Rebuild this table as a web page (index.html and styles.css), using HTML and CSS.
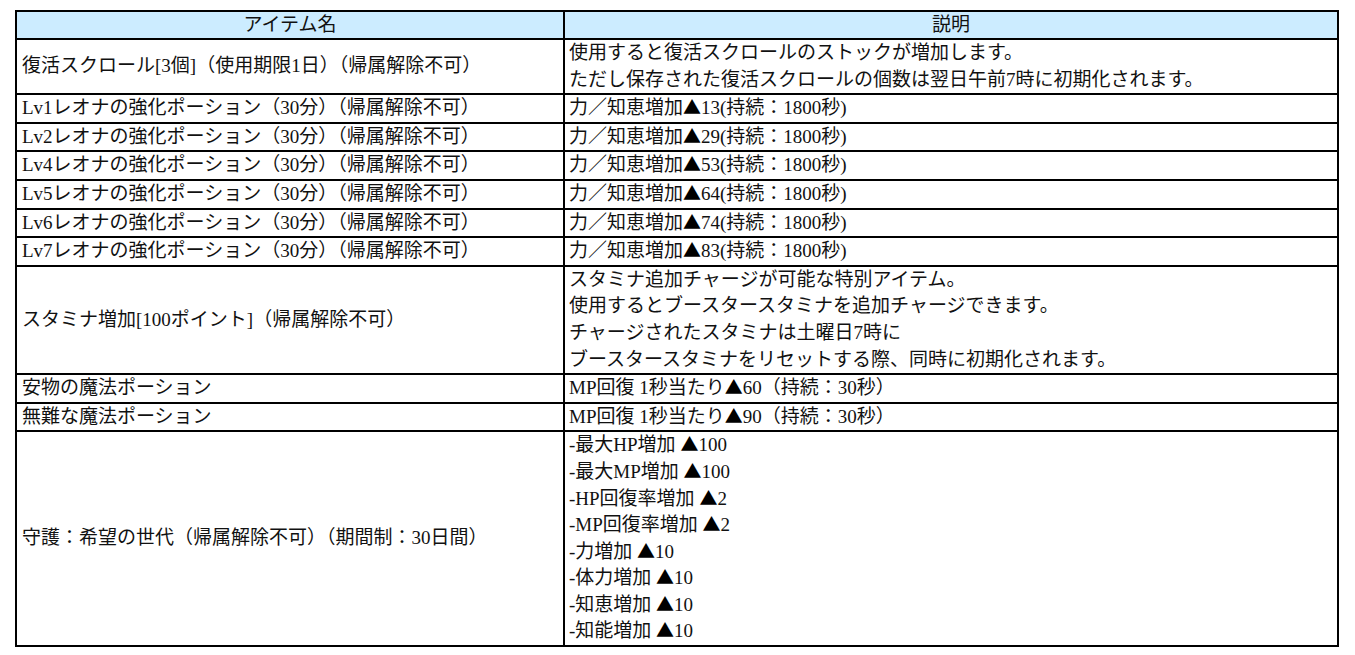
FILE: index.html
```html
<!DOCTYPE html>
<html lang="ja">
<head>
<meta charset="utf-8">
<title>アイテム一覧</title>
<link rel="stylesheet" href="styles.css">
</head>
<body>
<table class="items">
  <colgroup>
    <col class="col-name">
    <col class="col-desc">
  </colgroup>
  <thead>
    <tr>
      <th>アイテム名</th>
      <th>説明</th>
    </tr>
  </thead>
  <tbody>
    <tr>
      <td class="name">復活スクロール[3個]（使用期限1日）（帰属解除不可）</td>
      <td class="desc">使用すると復活スクロールのストックが増加します。<br>ただし保存された復活スクロールの個数は翌日午前7時に初期化されます。</td>
    </tr>
    <tr class="single">
      <td class="name">Lv1レオナの強化ポーション（30分）（帰属解除不可）</td>
      <td class="desc">力／知恵増加<span class="tri">▲</span>13(持続：1800秒)</td>
    </tr>
    <tr class="single">
      <td class="name">Lv2レオナの強化ポーション（30分）（帰属解除不可）</td>
      <td class="desc">力／知恵増加<span class="tri">▲</span>29(持続：1800秒)</td>
    </tr>
    <tr class="single">
      <td class="name">Lv4レオナの強化ポーション（30分）（帰属解除不可）</td>
      <td class="desc">力／知恵増加<span class="tri">▲</span>53(持続：1800秒)</td>
    </tr>
    <tr class="single">
      <td class="name">Lv5レオナの強化ポーション（30分）（帰属解除不可）</td>
      <td class="desc">力／知恵増加<span class="tri">▲</span>64(持続：1800秒)</td>
    </tr>
    <tr class="single">
      <td class="name">Lv6レオナの強化ポーション（30分）（帰属解除不可）</td>
      <td class="desc">力／知恵増加<span class="tri">▲</span>74(持続：1800秒)</td>
    </tr>
    <tr class="single">
      <td class="name">Lv7レオナの強化ポーション（30分）（帰属解除不可）</td>
      <td class="desc">力／知恵増加<span class="tri">▲</span>83(持続：1800秒)</td>
    </tr>
    <tr>
      <td class="name">スタミナ増加[100ポイント]（帰属解除不可）</td>
      <td class="desc">スタミナ追加チャージが可能な特別アイテム。<br>使用するとブースタースタミナを追加チャージできます。<br>チャージされたスタミナは土曜日7時に<br>ブースタースタミナをリセットする際、同時に初期化されます。</td>
    </tr>
    <tr>
      <td class="name">安物の魔法ポーション</td>
      <td class="desc">MP回復 1秒当たり<span class="tri">▲</span>60（持続：30秒）</td>
    </tr>
    <tr>
      <td class="name">無難な魔法ポーション</td>
      <td class="desc">MP回復 1秒当たり<span class="tri">▲</span>90（持続：30秒）</td>
    </tr>
    <tr>
      <td class="name">守護：希望の世代（帰属解除不可）（期間制：30日間）</td>
      <td class="desc">-最大HP増加 <span class="tri">▲</span>100<br>-最大MP増加 <span class="tri">▲</span>100<br>-HP回復率増加 <span class="tri">▲</span>2<br>-MP回復率増加 <span class="tri">▲</span>2<br>-力増加 <span class="tri">▲</span>10<br>-体力増加 <span class="tri">▲</span>10<br>-知恵増加 <span class="tri">▲</span>10<br>-知能増加 <span class="tri">▲</span>10</td>
    </tr>
  </tbody>
</table>
</body>
</html>
```

FILE: styles.css
```css
html, body {
  margin: 0;
  padding: 0;
  background: #ffffff;
}

body {
  padding: 10px 0 0 15px;
  font-family: "Liberation Serif", "Noto Sans CJK JP", serif;
  font-size: 19px;
  color: #111111;
}

.items {
  border-collapse: collapse;
  table-layout: fixed;
  width: 1322px;
}

.col-name {
  width: 548px;
}

.col-desc {
  width: 774px;
}

.items th,
.items td {
  border: 2px solid #000000;
  padding: 0 4px;
  line-height: 26.6px;
  white-space: nowrap;
  overflow: hidden;
}

.items th {
  background: #ccecff;
  font-weight: normal;
  text-align: center;
  height: 26px;
  line-height: 26px;
}

.items td {
  vertical-align: middle;
  text-align: left;
}

.items td.name {
  padding-left: 5px;
}

.items tr.single td {
  height: 26.5px;
}

.tri {
  font-family: "Noto Sans CJK JP", sans-serif;
  font-size: 18px;
  line-height: 1;
  color: #000000;
}
```
